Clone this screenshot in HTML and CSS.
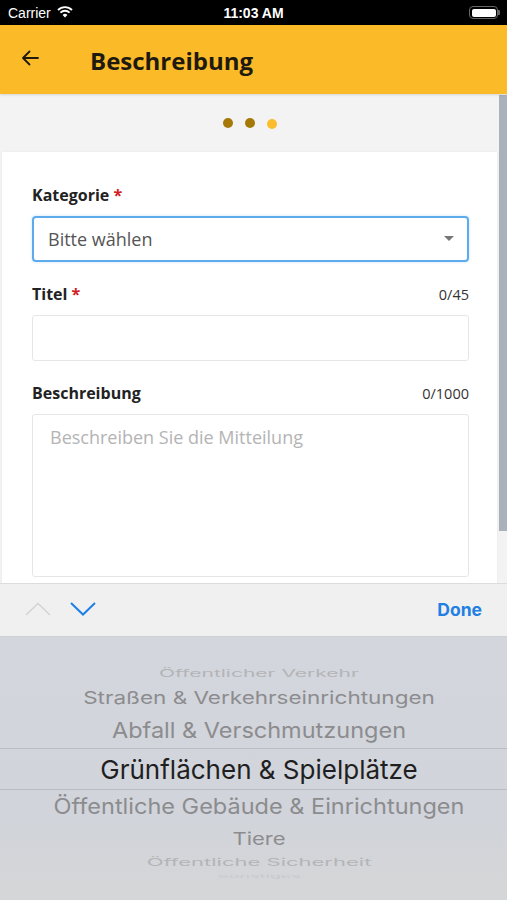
FILE: index.html
```html
<!DOCTYPE html>
<html lang="de">
<head>
<meta charset="utf-8">
<link rel="stylesheet" href="styles.css">
</head>
<body>
<div class="screen">
  <div class="statusbar">
    <div class="sb-left">
      <span>Carrier</span>
      <svg class="wifi" width="16" height="12" viewBox="0 0 16 12"><path d="M8 11.5 L5.6 8.9 A3.4 3.4 0 0 1 10.4 8.9 Z" fill="#fff"/><path d="M3.4 6.6 A6.6 6.6 0 0 1 12.6 6.6" stroke="#fff" stroke-width="1.8" fill="none"/><path d="M1 4 A10 10 0 0 1 15 4" stroke="#fff" stroke-width="1.8" fill="none"/></svg>
    </div>
    <div class="sb-time">11:03 AM</div>
    <div class="sb-right">
      <div class="battery"><div class="battery-fill"></div></div>
      <div class="battery-tip"></div>
    </div>
  </div>
  <div class="appbar">
    <svg class="back" width="18" height="16" viewBox="0 0 18 16"><path d="M17 8 H2 M8.5 1.5 L2 8 L8.5 14.5" stroke="#1f1a10" stroke-width="1.8" fill="none" stroke-linecap="round" stroke-linejoin="round"/></svg>
    <div class="title">Beschreibung</div>
  </div>
  <div class="content">
    <div class="stepper">
      <span class="dot done"></span>
      <span class="dot done"></span>
      <span class="dot active"></span>
    </div>
    <div class="card">
      <div class="field-head"><span class="label">Kategorie <span class="req">*</span></span></div>
      <div class="select">
        <span>Bitte wählen</span>
        <span class="caret"></span>
      </div>
      <div class="field-head"><span class="label">Titel <span class="req">*</span></span><span class="count">0/45</span></div>
      <div class="input"></div>
      <div class="field-head"><span class="label">Beschreibung</span><span class="count">0/1000</span></div>
      <div class="textarea">Beschreiben Sie die Mitteilung</div>
    </div>
    <div class="scroll-indicator"></div>
  </div>
  <div class="accessory">
    <div class="arrows">
      <svg width="26" height="14" viewBox="0 0 26 14"><path d="M1 13 L13 1.5 L25 13" stroke="#d3d3d5" stroke-width="1.5" fill="none"/></svg>
      <svg width="26" height="14" viewBox="0 0 26 14"><path d="M1 1 L13 12.5 L25 1" stroke="#1f7fe3" stroke-width="2" fill="none"/></svg>
    </div>
    <div class="done">Done</div>
  </div>
  <div class="picker">
    <div class="row r1"><span>Öffentlicher Verkehr</span></div>
    <div class="row r2"><span>Straßen &amp; Verkehrseinrichtungen</span></div>
    <div class="row r3"><span>Abfall &amp; Verschmutzungen</span></div>
    <div class="row r4"><span>Grünflächen &amp; Spielplätze</span></div>
    <div class="row r5"><span>Öffentliche Gebäude &amp; Einrichtungen</span></div>
    <div class="row r6"><span>Tiere</span></div>
    <div class="row r7"><span>Öffentliche Sicherheit</span></div>
    <div class="row r8"><span>Sonstiges</span></div>
  </div>
</div>
</body>
</html>
```
FILE: styles.css
```css
* { box-sizing: border-box; }
html, body { margin: 0; padding: 0; }
body { width: 507px; height: 900px; overflow: hidden; font-family: "Open Sans", "Noto Sans", sans-serif; }
.screen { width: 507px; height: 900px; display: flex; flex-direction: column; background: #f3f3f3; }

.statusbar { height: 25px; background: #000; color: #fff; display: flex; align-items: center; justify-content: space-between; padding: 0 7px 0 8px; position: relative; font-family: "Liberation Sans", Arial, sans-serif; font-size: 14px; }
.sb-left { display: flex; align-items: center; gap: 6px; }
.wifi { margin-top: -2px; }
.sb-time { position: absolute; left: 0; right: 0; text-align: center; font-weight: bold; font-size: 14px; pointer-events: none; }
.sb-right { display: flex; align-items: center; }
.battery { width: 29px; height: 13px; border: 1.5px solid #666; border-radius: 4px; padding: 1.5px; }
.battery-fill { width: 100%; height: 100%; background: #fff; border-radius: 2px; }
.battery-tip { width: 2px; height: 5px; background: #666; border-radius: 0 1px 1px 0; }

.appbar { height: 69px; background: #fbbb28; display: flex; align-items: center; padding-left: 21px; box-shadow: 0 1px 2px rgba(0,0,0,0.12); position: relative; z-index: 1; }
.back { margin-top: -4px; }
.title { margin-left: 51px; font-size: 24px; font-weight: 700; color: #1f1a10; margin-top: 2px; }

.content { height: 489px; position: relative; overflow: hidden; padding-right: 10px; }
.stepper { height: 58px; display: flex; justify-content: center; align-items: center; gap: 12px; margin-right: -3px; padding-top: 2px; }
.dot { width: 10px; height: 10px; border-radius: 50%; }
.dot.done { background: #a67907; }
.dot.active { background: #fbbd2b; }
.card { background: #fff; margin-left: 2px; padding: 32px 28px 0 30px; height: 440px; box-shadow: 0 0 2px rgba(0,0,0,0.06); }
.field-head { display: flex; justify-content: space-between; align-items: baseline; height: 22px; line-height: 22px; }
.label { font-size: 16px; font-weight: 700; color: #222; }
.req { color: #d0201e; }
.count { font-size: 14.5px; color: #333; }
.select { margin-top: 10px; height: 46px; border: 2px solid #5eabec; border-radius: 4px; display: flex; align-items: center; justify-content: space-between; padding: 0 13px 0 14px; font-size: 18px; color: #555; margin-bottom: 21px; box-shadow: 0 0 3px rgba(94,171,236,0.35); }
.caret { width: 0; height: 0; border-left: 5px solid transparent; border-right: 5px solid transparent; border-top: 5px solid #777; margin-top: -2px; }
.input { margin-top: 10px; height: 46px; border: 1px solid #e6e6e6; border-radius: 3px; margin-bottom: 21px; }
.textarea { margin-top: 10px; height: 163px; border: 1px solid #e6e6e6; border-radius: 3px; padding: 10px 17px; font-size: 18px; color: #b4b4b4; }
.scroll-indicator { position: absolute; right: 0; top: 1px; width: 8px; height: 436px; background: #a9b1bb; }

.accessory { height: 53px; background: #f0f0f1; border-top: 1px solid #dcdcde; display: flex; align-items: center; justify-content: space-between; padding: 0 25px 0 25px; }
.arrows { display: flex; gap: 19px; align-items: center; margin-top: -2px; }
.done { font-family: "Inter", "Liberation Sans", sans-serif; font-size: 17.5px; font-weight: 700; color: #1f7fe3; margin-top: -2px; }

.picker { flex: 1; background: linear-gradient(to bottom, #d3d6dc, #d1d4da 70%, #d5d6d7); padding-top: 27px; font-family: "Inter", "Liberation Sans", sans-serif; display: flex; flex-direction: column; border-top: 1px solid #cdd0d6; }
.row { display: flex; align-items: center; justify-content: center; white-space: nowrap; color: #8c8c8f; padding-left: 11px; }
.row span { display: inline-block; }
.r1 { height: 18px; font-size: 21px; color: #b3b4b7; }
.r1 span { transform: scaleY(0.48); }
.r2 { height: 30px; font-size: 22.5px; }
.r2 span { transform: scaleY(0.78); }
.r3 { height: 36px; font-size: 23.5px; }
.r3 span { transform: scaleY(0.92); }
.r4 { height: 42px; font-size: 26px; color: #1f1f21; border-top: 1px solid #b9bcc2; border-bottom: 1px solid #b9bcc2; }
.r5 { height: 32px; font-size: 23.5px; }
.r5 span { transform: scaleY(0.92); }
.r6 { height: 34px; font-size: 22px; }
.r6 span { transform: scaleY(0.78); }
.r7 { height: 12px; font-size: 22px; color: #b3b4b7; }
.r7 span { transform: scaleY(0.48); }
.r8 { height: 16px; font-size: 18px; color: #c6c8cc; }
.r8 span { transform: scaleY(0.22); }
```
